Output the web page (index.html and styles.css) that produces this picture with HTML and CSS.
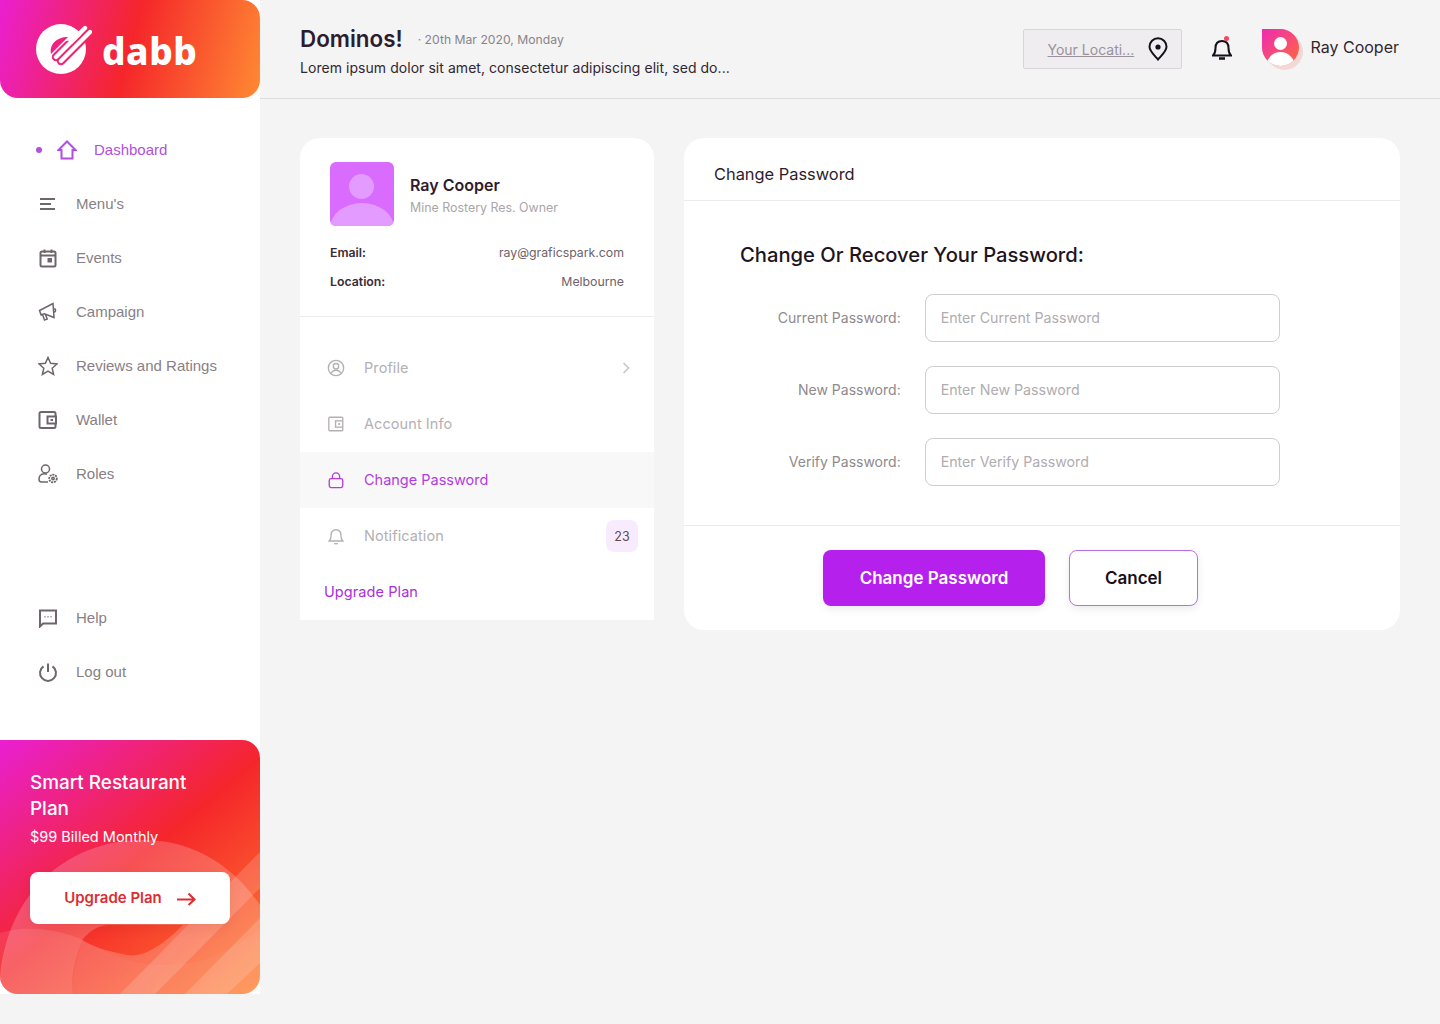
FILE: index.html
```html
<!DOCTYPE html>
<html>
<head>
  <title>dabb - Change Password</title>
  <link rel="stylesheet" href="styles.css">
</head>
<body>
<div class="app">

  <aside class="sidebar">
    <div class="logo">
      <svg class="logo-mark" width="56" height="52" viewBox="0 0 56 52">
        <mask id="logoCut">
          <rect width="56" height="52" fill="#fff"/>
          <path d="M15 30C13 21 20 13 32 13L15 30z" fill="#000"/>
          <path d="M20 33L32 21" stroke="#000" stroke-width="8.400" stroke-linecap="round" fill="none"/>
          <path d="M25 37L58 4" stroke="#000" stroke-width="8.400" stroke-linecap="round" fill="none"/>
        </mask>
        <circle cx="25" cy="25" r="25" fill="#fff" mask="url(#logoCut)"/>
        <path d="M20 33L49 4M25 37L54 8" stroke="#fff" stroke-width="4.400" stroke-linecap="round" fill="none"/>
      </svg>
      <span class="logo-text">dabb</span>
    </div>

    <nav class="nav">
      <a class="nav-item active">
        <span class="dot"></span>
        <svg class="icon" viewBox="0 0 20 20"><path d="M1.500 10L10 1.500 18.500 10H15.500V18.500H4.500V10z"/></svg>
        Dashboard
      </a>
      <a class="nav-item">
        <svg class="icon" viewBox="0 0 20 20"><path class="thick" d="M2 5H17M2 10H13M2 15H17"/></svg>
        Menu's
      </a>
      <a class="nav-item">
        <svg class="icon" viewBox="0 0 20 20"><rect class="thick" x="2.500" y="3.500" width="15" height="15" rx="1.500"/><path class="thick" d="M2.500 7.500H17.500M6.500 1.500V5M13.500 1.500V5"/><rect class="solid" x="9.500" y="10" width="4.500" height="4.500"/></svg>
        Events
      </a>
      <a class="nav-item">
        <svg class="icon" viewBox="0 0 20 20"><path d="M15 1.500L16 15.500 6.500 11.800 3 12.800 1.500 8.500 4.500 7zM4.500 12.500L6.500 18 9.200 17 7.500 12.500M16.300 6.500c1.700 .5 1.700 3 .2 3.700"/></svg>
        Campaign
      </a>
      <a class="nav-item">
        <svg class="icon" viewBox="0 0 20 20"><path d="M10 1.500L12.600 7.300 19 8 14.200 12.200 15.600 18.500 10 15.200 4.400 18.500 5.800 12.200 1 8 7.400 7.300z"/></svg>
        Reviews and Ratings
      </a>
      <a class="nav-item">
        <svg class="icon" viewBox="0 0 20 20"><path class="thick" d="M17.500 6V3.500A1.500 1.500 0 0 0 16 2H3A1.500 1.500 0 0 0 1.500 3.500V16.500A1.500 1.500 0 0 0 3 18H16a1.500 1.500 0 0 0 1.500-1.500V14"/><rect class="thick" x="9.500" y="6.500" width="8.500" height="7"/><rect class="solid" x="12.500" y="9" width="2.500" height="2"/></svg>
        Wallet
      </a>
      <a class="nav-item">
        <svg class="icon" viewBox="0 0 20 20"><circle cx="7.500" cy="5" r="4"/><path d="M9 10.300C5 8.500 1 11 1 15c0 2 .8 3 2.500 3H10"/><circle class="gear" cx="15" cy="14.500" r="3.800"/><circle cx="15" cy="14.500" r="1.200"/></svg>
        Roles
      </a>

      <a class="nav-item nav-gap">
        <svg class="icon" viewBox="0 0 20 20"><path class="thick" d="M2 2.500H18V15.500H5L2 18.500z"/><path d="M6.500 8.800H7.500M9.500 8.800H10.500M12.500 8.800H13.500"/></svg>
        Help
      </a>
      <a class="nav-item">
        <svg class="icon" viewBox="0 0 20 20"><path class="thick" d="M10 1.500V10M5.500 4.300a8 8 0 1 0 9 0"/></svg>
        Log out
      </a>
    </nav>

    <div class="promo">
      <svg class="promo-art" viewBox="0 0 260 254" width="260" height="254">
        <path fill-rule="evenodd" d="M0 254V237C8 150 70 100 143 100C190 100 230 122 260 165V254zM82 200C90 190 100 185 110 185H183C165 203 145 218 127 215C112 212 95 208 82 200z" fill="#fff" opacity=".2"/>
        <path d="M0 193C20 187 50 186 83 200C76 215 70 235 73 254H0z" fill="#fff" opacity=".1"/>
        <path d="M127 220C145 226 190 228 217 215C232 208 248 198 260 190V254H73C72 240 76 220 83 200C95 208 112 214 127 220z" fill="#fff" opacity=".04"/>
        <path d="M120 254L260 112V148L155 254z" fill="#fff" opacity=".16"/>
        <path d="M185 254L260 178V223L227 254z" fill="#fff" opacity=".16"/>
      </svg>
      <h3 class="promo-title">Smart Restaurant Plan</h3>
      <p class="promo-price">$99 Billed Monthly</p>
      <a class="promo-btn">
        Upgrade Plan
        <svg width="20" height="14" viewBox="0 0 20 14"><path d="M1 7.500H18.500M12.500 1.500L18.500 7.500 12.500 13"/></svg>
      </a>
    </div>
  </aside>

  <div class="content">
    <header class="topbar">
      <div class="topbar-text">
        <div class="topbar-title">
          <h1>Dominos!</h1>
          <span class="date">&middot; 20th Mar 2020, Monday</span>
        </div>
        <p class="tagline">Lorem ipsum dolor sit amet, consectetur adipiscing elit, sed do...</p>
      </div>
      <div class="location">
        <span>Your Locati...</span>
        <svg width="20" height="24" viewBox="0 0 20 24"><path d="M10 22.500C5 17 1.500 14 1.500 9.800a8.500 8.500 0 0 1 17 0C18.500 14 15 17 10 22.500z"/><circle cx="10" cy="10" r="2.600" class="pin-dot"/></svg>
      </div>
      <div class="bell">
        <svg width="20" height="24" viewBox="0 0 20 24"><path d="M1 18.500c2-2 2.500-3.500 2.500-7.500 0-4.500 2.500-7 6.500-7s6.500 2.500 6.500 7c0 4 .5 5.500 2.500 7.500z"/><path class="bell-clap" d="M7 21.500h6"/></svg>
        <span class="bell-dot"></span>
      </div>
      <div class="user">
        <div class="user-avatar">
          <div class="user-face">
            <span class="user-head"></span>
            <span class="user-body"></span>
          </div>
        </div>
        <span class="user-name">Ray Cooper</span>
      </div>
    </header>

    <main class="main">
      <section class="card profile-card">
        <div class="profile-top">
          <div class="profile-head">
            <div class="avatar">
              <span class="avatar-head"></span>
              <span class="avatar-body"></span>
            </div>
            <div class="profile-text">
              <div class="profile-name">Ray Cooper</div>
              <div class="profile-role">Mine Rostery Res. Owner</div>
            </div>
          </div>
          <div class="info-row"><strong>Email:</strong><span>ray@graficspark.com</span></div>
          <div class="info-row"><strong>Location:</strong><span>Melbourne</span></div>
        </div>
        <ul class="side-menu">
          <li>
            <svg class="icon-sm" viewBox="0 0 20 20"><circle cx="10" cy="10" r="8.500"/><circle cx="10" cy="8" r="3"/><path d="M4.500 16c1-2.500 3-3.500 5.500-3.500s4.500 1 5.500 3.500"/></svg>
            Profile
            <svg class="chevron" width="8" height="12" viewBox="0 0 8 12"><path d="M1.500 1L6.500 6 1.500 11"/></svg>
          </li>
          <li>
            <svg class="icon-sm" viewBox="0 0 20 20"><path d="M17.500 6V3.500a1 1 0 0 0-1-1H3a1 1 0 0 0-1 1V16.500a1 1 0 0 0 1 1H16.500a1 1 0 0 0 1-1V14"/><rect x="9.500" y="6.500" width="8" height="7"/><rect class="solid" x="12.500" y="9" width="2" height="2"/></svg>
            Account Info
          </li>
          <li class="selected">
            <svg class="icon-sm" viewBox="0 0 20 20"><rect x="2.500" y="8.500" width="15" height="10" rx="2"/><path d="M6 8.500V6a4 4 0 0 1 8 0v2.500"/></svg>
            Change Password
          </li>
          <li>
            <svg class="icon-sm" viewBox="0 0 20 20"><path d="M2.500 15.500c1.500-1.500 2-3 2-6 0-4 2-6.500 5.500-6.500s5.500 2.500 5.500 6.500c0 3 .5 4.500 2 6z"/><path d="M8 18.500h4"/></svg>
            Notification
            <span class="badge">23</span>
          </li>
          <li class="upgrade">Upgrade Plan</li>
        </ul>
      </section>

      <section class="card password-card">
        <div class="card-title">Change Password</div>
        <form class="password-form">
          <h2>Change Or Recover Your Password:</h2>
          <label class="field"><span>Current Password:</span><input type="password" placeholder="Enter Current Password"></label>
          <label class="field"><span>New Password:</span><input type="password" placeholder="Enter New Password"></label>
          <label class="field"><span>Verify Password:</span><input type="password" placeholder="Enter Verify Password"></label>
        </form>
        <div class="card-actions">
          <button type="button" class="btn-primary">Change Password</button>
          <button type="button" class="btn-cancel">Cancel</button>
        </div>
      </section>
    </main>
  </div>

</div>
</body>
</html>
```

FILE: styles.css
```css
* {
  box-sizing: border-box;
}

body {
  margin: 0;
  background: #f4f4f5;
  font-family: 'Inter', sans-serif;
  color: #2e2230;
}

h1, h2, h3, p, ul {
  margin: 0;
  padding: 0;
}

.app {
  display: flex;
  min-height: 1024px;
}

/* sidebar */
.sidebar {
  width: 260px;
  height: 994px;
  background: #fff;
  display: flex;
  flex-direction: column;
  flex-shrink: 0;
}

.logo {
  height: 98px;
  padding-left: 36px;
  display: flex;
  align-items: center;
  gap: 10px;
  background: linear-gradient(105deg, #ea1fd2 0%, #f5262a 50%, #ff8a33 100%);
  border-radius: 0 18px 18px 18px;
}

.logo-mark {
  margin-top: 2px;
}

.logo-text {
  margin-top: 2px;
  font-family: 'Noto Sans', sans-serif;
  font-weight: 800;
  font-size: 37px;
  letter-spacing: .5px;
  color: #fff;
}

.nav {
  padding-top: 25px;
  display: flex;
  flex-direction: column;
}

.nav-item {
  height: 54px;
  padding-left: 38px;
  padding-bottom: 2px;
  display: flex;
  align-items: center;
  font-family: 'Liberation Sans', sans-serif;
  font-size: 15px;
  color: #887f86;
}

.nav-item .icon {
  width: 20px;
  height: 20px;
  margin-top: 2px;
  margin-right: 18px;
  fill: none;
  stroke: #6f666d;
  stroke-width: 1.500;
}

.icon .thick {
  stroke-width: 2;
}

.icon .gear {
  stroke-dasharray: 2 .8;
  stroke-width: 1.800;
}

.icon .solid, .icon-sm .solid {
  fill: #6f666d;
  stroke: none;
}

.nav-item.active {
  padding-left: 36px;
  color: #b04fe0;
}

.nav-item.active .icon {
  stroke: #b04fe0;
  stroke-width: 2;
  margin-left: 15px;
  margin-right: 17px;
}

.dot {
  width: 6px;
  height: 6px;
  margin-top: 2px;
  border-radius: 50%;
  background: #b04fe0;
}

.nav-gap {
  margin-top: 90px;
}

.promo {
  margin-top: auto;
  height: 254px;
  padding: 30px 30px 0;
  position: relative;
  overflow: hidden;
  border-radius: 0 18px 18px 18px;
  background: linear-gradient(140deg, #e91fd3 0%, #f5262a 50%, #ff8030 100%);
  color: #fff;
}

.promo-art {
  position: absolute;
  left: 0;
  top: 0;
}

.promo-title, .promo-price, .promo-btn {
  position: relative;
}

.promo-title {
  width: 180px;
  font-size: 18.900px;
  line-height: 26px;
  font-weight: 500;
}

.promo-price {
  margin-top: 5px;
  font-size: 14.500px;
  line-height: 20px;
}

.promo-btn {
  margin-top: 25px;
  height: 52px;
  padding-bottom: 2px;
  display: flex;
  align-items: center;
  justify-content: center;
  gap: 14px;
  background: #fff;
  border-radius: 8px;
  color: #dd2c33;
  font-size: 15px;
  font-weight: 600;
  box-shadow: 0 4px 14px rgba(0,0,0,0.06);
}

.promo-btn svg {
  margin-top: 4px;
  fill: none;
  stroke: #dd2c33;
  stroke-width: 2;
}

/* top bar */
.content {
  flex: 1;
}

.topbar {
  height: 99px;
  padding: 0 41px 0 40px;
  border-bottom: 1px solid #dcdcdc;
  display: flex;
  align-items: center;
}

.topbar-text {
  flex: 1;
}

.topbar-title {
  margin-top: 1px;
  display: flex;
  align-items: center;
  gap: 15px;
}

h1 {
  font-size: 22.400px;
  line-height: 30px;
  font-weight: 600;
  color: #2e1c2e;
}

.date {
  margin-top: 2px;
  font-size: 12.200px;
  color: #8a8488;
}

.tagline {
  margin-top: 5px;
  font-size: 14px;
  letter-spacing: .05px;
  color: #33262f;
}

.location {
  width: 159px;
  height: 40px;
  margin-right: 30px;
  padding: 0 13px 0 24px;
  display: flex;
  align-items: center;
  justify-content: space-between;
  background: #efedf0;
  border: 1px solid #d8d5da;
  border-radius: 2px;
  font-size: 14px;
  color: #9a9299;
}

.location span {
  text-decoration: underline;
}

.location svg {
  fill: none;
  stroke: #17101a;
  stroke-width: 2;
}

.location .pin-dot {
  fill: #17101a;
  stroke: none;
}

.bell {
  position: relative;
  width: 20px;
  height: 24px;
  margin-right: 30px;
}

.bell svg {
  display: block;
  fill: none;
  stroke: #17101a;
  stroke-width: 2;
}

.bell .bell-clap {
  stroke-width: 2.500;
}

.bell-dot {
  position: absolute;
  top: -1px;
  right: 3px;
  width: 5px;
  height: 5px;
  border-radius: 50%;
  background: #ef4a5f;
}

.user {
  display: flex;
  align-items: center;
  gap: 12px;
}

.user-avatar {
  width: 37px;
  height: 37px;
  margin-top: -3px;
  border-radius: 0 50% 50% 50%;
  box-shadow: 4px 4px 0 #f3d8d5;
}

.user-face {
  position: relative;
  width: 100%;
  height: 100%;
  overflow: hidden;
  border-radius: 0 50% 50% 50%;
  background: linear-gradient(135deg, #ee2bb2 0%, #ff6a3a 100%);
}

.user-head {
  position: absolute;
  left: 12px;
  top: 8px;
  width: 13px;
  height: 13px;
  border-radius: 50%;
  background: #fff;
}

.user-body {
  position: absolute;
  left: 4px;
  top: 23px;
  width: 29px;
  height: 30px;
  border-radius: 50%;
  background: #fff;
}

.user-name {
  margin-top: -4px;
  font-size: 16px;
  color: #33262f;
}

/* cards */
.main {
  padding: 39px 40px 0;
  display: flex;
  align-items: flex-start;
  gap: 30px;
}

.card {
  background: #fff;
  border-radius: 20px;
}

.profile-card {
  width: 354px;
  height: 482px;
  border-radius: 20px 20px 0 0;
}

.profile-top {
  height: 179px;
  padding: 24px 30px 0;
  border-bottom: 1px solid #ececec;
}

.profile-head {
  display: flex;
  align-items: center;
  gap: 16px;
  margin-bottom: 12px;
}

.avatar {
  position: relative;
  width: 64px;
  height: 64px;
  overflow: hidden;
  border-radius: 6px;
  background: #d96bff;
}

.avatar-head {
  position: absolute;
  left: 19px;
  top: 12px;
  width: 25px;
  height: 25px;
  border-radius: 50%;
  background: #e39bff;
}

.avatar-body {
  position: absolute;
  left: 0;
  top: 41px;
  width: 64px;
  height: 50px;
  border-radius: 50%;
  background: #e39bff;
}

.profile-text {
  padding-top: 2px;
}

.profile-name {
  font-size: 16px;
  font-weight: 600;
  color: #2e1c2e;
}

.profile-role {
  margin-top: 5px;
  font-size: 12.400px;
  color: #aaa5a9;
}

.info-row {
  height: 29px;
  display: flex;
  align-items: center;
  justify-content: space-between;
  font-size: 12.300px;
  color: #6d6369;
}

.info-row strong {
  font-weight: 600;
  color: #3a2c36;
}

.side-menu {
  list-style: none;
  padding-top: 23px;
}

.side-menu li {
  position: relative;
  height: 56px;
  padding-left: 27px;
  padding-bottom: 2px;
  display: flex;
  align-items: center;
  gap: 19px;
  font-size: 14.500px;
  letter-spacing: .08px;
  color: #b4b0b3;
}

.icon-sm {
  width: 18px;
  height: 18px;
  margin-top: 2px;
  fill: none;
  stroke: #b4b0b3;
  stroke-width: 1.500;
}

.icon-sm .solid {
  fill: #b4b0b3;
}

.side-menu li.selected {
  background: #f8f8f8;
  letter-spacing: 0;
  color: #b13ddf;
}

.selected .icon-sm {
  stroke: #b13ddf;
}

.chevron {
  margin-top: 2px;
  margin-left: auto;
  margin-right: 24px;
  fill: none;
  stroke: #c6c3c5;
  stroke-width: 1.500;
}

.badge {
  width: 32px;
  height: 32px;
  margin-top: 2px;
  margin-left: auto;
  margin-right: 16px;
  display: flex;
  align-items: center;
  justify-content: center;
  border-radius: 8px;
  background: #f8ebfd;
  font-size: 12.500px;
  color: #5a4c58;
}

.side-menu li.upgrade {
  padding-left: 24px;
  color: #a92fdc;
}

.password-card {
  width: 716px;
  height: 492px;
}

.card-title {
  height: 63px;
  padding: 10px 30px 0;
  display: flex;
  align-items: center;
  border-bottom: 1px solid #ececec;
  font-size: 16.400px;
  color: #2e1c2e;
}

.password-form {
  height: 325px;
  padding: 41px 120px 0 56px;
  border-bottom: 1px solid #ececec;
}

h2 {
  margin-bottom: 26px;
  font-size: 20.200px;
  line-height: 26px;
  font-weight: 500;
  color: #1e1420;
}

.field {
  display: flex;
  align-items: center;
  margin-bottom: 24px;
  font-size: 14px;
  color: #8f898d;
}

.field span {
  width: 161px;
  margin-right: 24px;
  margin-top: -2px;
  text-align: right;
}

.field input {
  width: 356px;
  height: 48px;
  padding: 0 15px 2px;
  background: #fff;
  border: 1px solid #d0ced0;
  border-radius: 8px;
  font-family: 'Inter', sans-serif;
  font-size: 14.200px;
}

.field input::placeholder {
  color: #b0acaf;
}

.card-actions {
  padding: 24px 63px 0 0;
  display: flex;
  justify-content: center;
  gap: 24px;
}

.card-actions button {
  height: 56px;
  border-radius: 8px;
  font-family: 'Inter', sans-serif;
  font-size: 17px;
  font-weight: 600;
  cursor: pointer;
}

.btn-primary {
  width: 222px;
  background: #b520ec;
  border: none;
  color: #fff;
  box-shadow: 0 3px 8px rgba(0,0,0,0.08);
}

.btn-cancel {
  width: 129px;
  background: #fff;
  border: 1.500px solid #bc6fe0;
  color: #17101a;
  box-shadow: 0 3px 8px rgba(0,0,0,0.08);
}
```
